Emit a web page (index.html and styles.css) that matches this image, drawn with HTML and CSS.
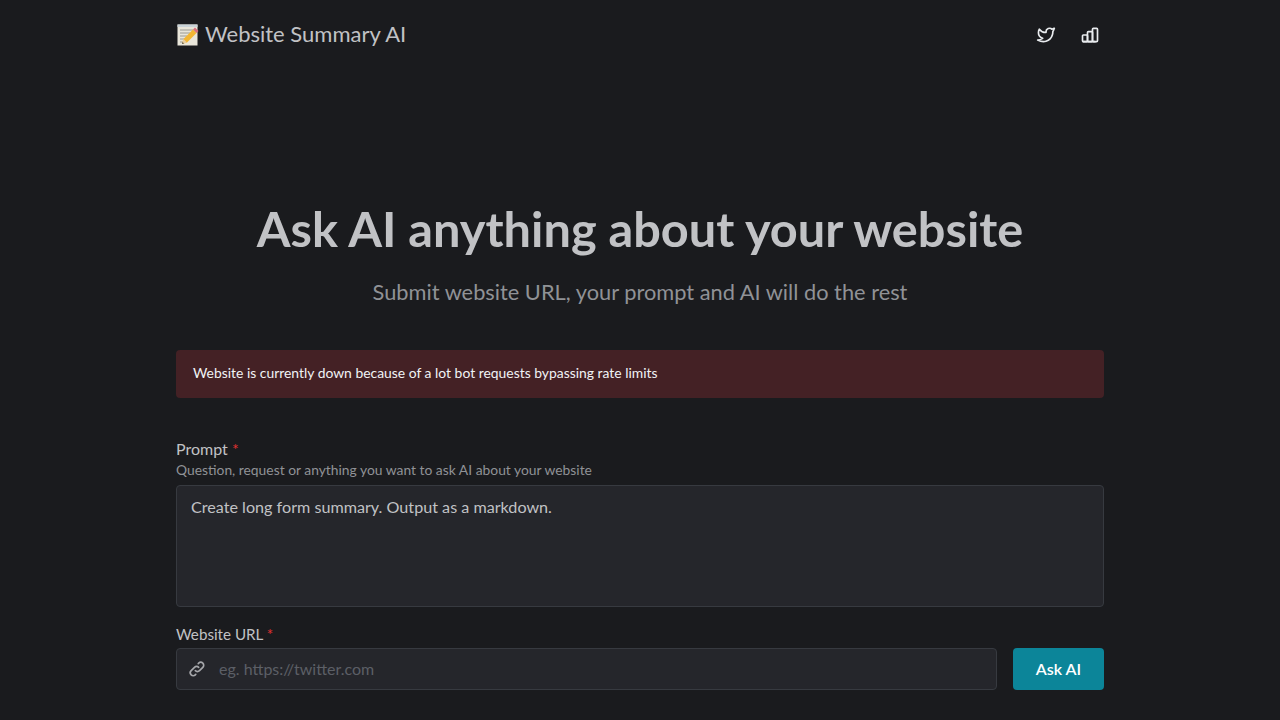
FILE: index.html
```html
<!DOCTYPE html>
<html lang="en">
<head>
<meta charset="utf-8">
<title>Website Summary AI</title>
<link rel="stylesheet" href="styles.css">
</head>
<body>
<div class="page">
  <header class="header">
    <a class="brand" href="#">
      <svg class="memo" viewBox="0 0 22 22" width="22" height="22" aria-hidden="true">
        <rect x="0.5" y="0.5" width="20" height="21" fill="#e9e6da"/>
        <rect x="0.5" y="0.5" width="20" height="2.5" fill="#c9d3d8"/>
        <path d="M3 6h13M3 9h10M3 12h7M3 15h5M3 18h4" stroke="#9a9a92" stroke-width="1"/>
        <path d="M5 20l1.5-5L16 5.5l3.5 3.5L10 18.5z" fill="#f2b632"/>
        <path d="M16 5.5l2-2 3.5 3.5-2 2z" fill="#d9707c"/>
        <path d="M5 20l1.5-5 3.5 3.5z" fill="#e9cfa0"/>
        <path d="M5 20l.6-2 1.4 1.4z" fill="#444"/>
      </svg>
      <span class="brand-text">Website Summary AI</span>
    </a>
    <nav class="icons">
      <a class="icon-link" href="#" aria-label="Twitter">
        <svg viewBox="0 0 24 24" width="20" height="20" fill="none" stroke="currentColor" stroke-width="2" stroke-linecap="round" stroke-linejoin="round"><path d="M22 4.01c-1 .49-1.98.689-3 .99-1.121-1.265-2.783-1.335-4.38-.737S11.977 6.323 12 8v1c-3.245.083-6.135-1.395-8-4 0 0-4.182 7.433 4 11-1.872 1.247-3.739 2.088-6 2 3.308 1.803 6.913 2.423 10.034 1.517 3.58-1.04 6.522-3.723 7.651-7.742a13.84 13.84 0 0 0 .497-3.753C20.18 7.773 21.692 5.25 22 4.009z"/></svg>
      </a>
      <a class="icon-link" href="#" aria-label="Stats">
        <svg viewBox="0 0 24 24" width="20" height="20" fill="none" stroke="currentColor" stroke-width="2" stroke-linecap="round" stroke-linejoin="round"><rect x="3" y="12" width="6" height="8" rx="1"/><rect x="9" y="8" width="6" height="12" rx="1"/><rect x="15" y="4" width="6" height="16" rx="1"/><path d="M4 20h14"/></svg>
      </a>
    </nav>
  </header>

  <section class="hero">
    <h1 class="title">Ask AI anything about your website</h1>
    <p class="subtitle">Submit website URL, your prompt and AI will do the rest</p>
  </section>

  <div class="alert">Website is currently down because of a lot bot requests bypassing rate limits</div>

  <form class="form">
    <label class="label" for="prompt">Prompt <span class="req">*</span></label>
    <div class="hint">Question, request or anything you want to ask AI about your website</div>
    <textarea class="textarea" id="prompt">Create long form summary. Output as a markdown.</textarea>

    <label class="label url-label" for="url">Website URL <span class="req">*</span></label>
    <div class="url-row">
      <div class="input-wrap">
        <svg class="link-icon" viewBox="0 0 24 24" width="20" height="20" fill="none" stroke="currentColor" stroke-width="2" stroke-linecap="round" stroke-linejoin="round"><path d="M10 14a3.5 3.5 0 0 0 5 0l4-4a3.5 3.5 0 0 0-5-5l-.5.5"/><path d="M14 10a3.5 3.5 0 0 0-5 0l-4 4a3.5 3.5 0 0 0 5 5l.5-.5"/></svg>
        <input class="input" id="url" type="text" placeholder="eg. https://twitter.com">
      </div>
      <button class="button" type="button">Ask AI</button>
    </div>
  </form>
</div>
</body>
</html>
```

FILE: styles.css
```css
* { box-sizing: border-box; }
html, body { margin: 0; height: 100%; overflow: hidden; }
body {
  background: #1a1b1e;
  color: #c1c2c5;
  font-family: "Lato", "Liberation Sans", sans-serif;
}
.page { width: 928px; margin: 0 auto; }
.header {
  height: 70px;
  display: flex;
  align-items: center;
  justify-content: space-between;
}
.brand {
  display: flex;
  align-items: center;
  gap: 6px;
  color: #c1c2c5;
  font-size: 22px;
  font-weight: 400;
  text-decoration: none;
}
.brand-text { padding-bottom: 3px; }
.memo { margin-left: 1px; }
.icons { display: flex; gap: 24px; margin-right: 4px; }
.icon-link { display: flex; color: #e9ecef; }
.hero { margin-top: 127px; text-align: center; }
.title {
  margin: 0;
  font-size: 48.7px;
  line-height: 62px;
  font-weight: 700;
  color: #c1c2c5;
}
.subtitle {
  margin: 19px 0 0;
  font-size: 21.8px;
  line-height: 28px;
  font-weight: 400;
  color: #909296;
}
.alert {
  margin-top: 44px;
  height: 48px;
  padding: 0 17px 4px;
  display: flex;
  align-items: center;
  background: #442125;
  border-radius: 4px;
  color: #f1f3f5;
  font-size: 13.9px;
}
.form { margin-top: 41px; display: flex; flex-direction: column; }
.label { font-size: 16px; line-height: 20px; font-weight: 400; color: #c1c2c5; }
.req { color: #e03131; }
.hint { font-size: 13.85px; line-height: 20px; color: #909296; margin-top: 1px; }
.textarea {
  display: block;
  width: 100%;
  height: 122px;
  margin-top: 5px;
  padding: 10px 14px;
  background: #25262b;
  border: 1px solid #373a40;
  border-radius: 4px;
  color: #c1c2c5;
  font: 400 16.15px/22px "Lato", "Liberation Sans", sans-serif;
  resize: none;
  outline: none;
}
.url-label { margin-top: 17px; font-size: 15.2px; }
.url-row { display: flex; gap: 16px; margin-top: 4px; }
.input-wrap {
  flex: 1;
  height: 42px;
  display: flex;
  align-items: center;
  gap: 12px;
  padding: 0 10px;
  background: #25262b;
  border: 1px solid #373a40;
  border-radius: 4px;
}
.link-icon { color: #a6a7ab; flex: none; }
.input {
  flex: 1;
  min-width: 0;
  border: 0;
  padding: 0 0 2px;
  background: transparent;
  color: #c1c2c5;
  font: 400 16px "Lato", "Liberation Sans", sans-serif;
  outline: none;
}
.input::placeholder { color: #5c5f66; opacity: 1; }
.button {
  width: 91px;
  height: 42px;
  padding: 0 0 2px;
  border: 0;
  border-radius: 4px;
  background: #0c8599;
  color: #fff;
  font: 600 16px "Lato", "Liberation Sans", sans-serif;
}
```
